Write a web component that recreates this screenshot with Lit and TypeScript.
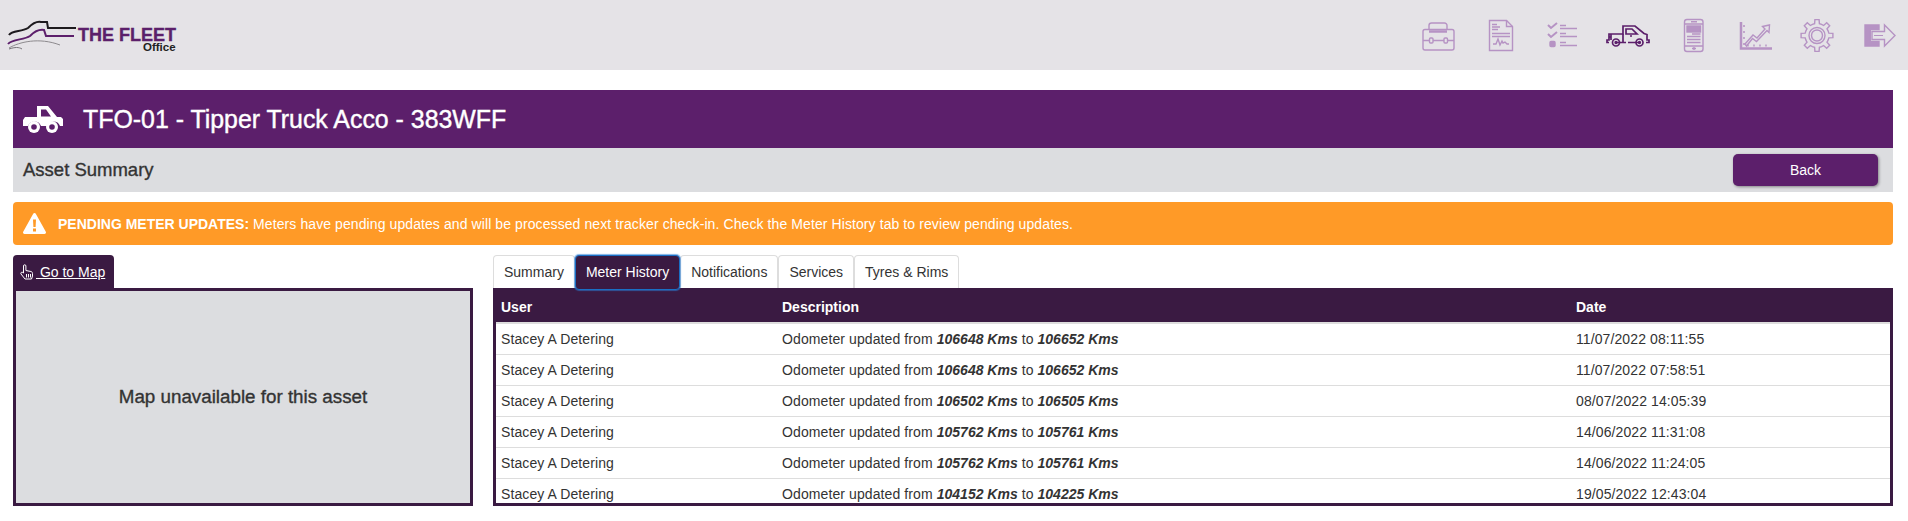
import { LitElement, html, svg, css } from 'lit';
import { customElement } from 'lit/decorators.js';

const rows = [
  ['Stacey A Detering', '106648', '106652', '11/07/2022 08:11:55'],
  ['Stacey A Detering', '106648', '106652', '11/07/2022 07:58:51'],
  ['Stacey A Detering', '106502', '106505', '08/07/2022 14:05:39'],
  ['Stacey A Detering', '105762', '105761', '14/06/2022 11:31:08'],
  ['Stacey A Detering', '105762', '105761', '14/06/2022 11:24:05'],
  ['Stacey A Detering', '104152', '104225', '19/05/2022 12:43:04'],
];

const tabs = ['Summary', 'Meter History', 'Notifications', 'Services', 'Tyres & Rims'];

// outline of a cog, used by the settings icon
function gearPath(cx: number, cy: number, outer: number, inner: number, teeth: number) {
  const pts: string[] = [];
  const step = (Math.PI * 2) / teeth;
  for (let i = 0; i < teeth; i++) {
    const a = i * step - Math.PI / 2;
    const offsets: [number, number][] = [
      [-0.5, inner],
      [-0.26, inner],
      [-0.17, outer],
      [0.17, outer],
      [0.26, inner],
    ];
    for (const [o, r] of offsets) {
      const t = a + o * step;
      pts.push(`${(cx + Math.cos(t) * r).toFixed(1)} ${(cy + Math.sin(t) * r).toFixed(1)}`);
    }
  }
  return `M${pts.join('L')}Z`;
}

const navIcons = [
  {
    w: 67,
    body: svg`
      <rect x="18" y="29.500" width="31" height="20.500" rx="2"/>
      <path d="M24 30v-4.500a2.500 2.500 0 0 1 2.500-2.500h13a2.500 2.500 0 0 1 2.500 2.500V30"/>
      <path d="M24 31.500h18" stroke-width="2.500"/>
      <path d="M18 40.500h6.500M28 40.500h11M42.500 40.500H49"/>
      <rect x="24.500" y="38" width="3.500" height="5" rx="1"/>
      <rect x="39" y="38" width="3.500" height="5" rx="1"/>`,
  },
  {
    w: 58,
    body: svg`
      <path d="M17.500 20.500h17l6 6v24h-23z"/>
      <path d="M34.500 20.500v6h6"/>
      <path d="M20 24.500h5M20 27h8M20 29.500h6M20 33.500h18M20 36.500h18"/>
      <path d="M21 44h3l2-5 2 6 2-4 1 2 2-1 2 2h2"/>`,
  },
  {
    w: 62,
    body: svg`
      <path d="M18 25l3 3 6-5M18 34l3 3 6-5" stroke-width="2"/>
      <rect x="20" y="41.500" width="5" height="5" rx="1" fill="#b693c4"/>
      <path d="M30 25.500h6M30 28.500h17M30 33.500h6M30 36.500h17M30 42.500h6M30 45.500h17"/>`,
  },
  {
    w: 75,
    dark: true,
    body: svg`
      <path d="M17 42.500h-2v-2.500h2v-6h14V26h12l9 7.500 3 1v5.500h2v2.500h-3"/>
      <path d="M31 34v8.500M25 42.500h9M47.500 42.500H36"/>
      <path d="M34 29h6l5 5H34z"/>
      <path d="M17 37h2M19 34v6"/>
      <circle cx="24" cy="42.500" r="3.500"/><circle cx="24" cy="42.500" r=".8"/>
      <circle cx="47.500" cy="42.500" r="3.500"/><circle cx="47.500" cy="42.500" r=".8"/>
      <path d="M38 36h2"/>`,
  },
  {
    w: 55,
    body: svg`
      <rect x="17.500" y="19.500" width="18.500" height="32" rx="2.500"/>
      <path d="M17.500 24h18.500M17.500 46h18.500M24 21.800h6"/>
      <rect x="20" y="26" width="13.500" height="6" fill="#b693c4"/>
      <path d="M25 34h8.500M20 36.500h13.500M20 39.500h13.500M20 42.500h13.500M25 48.500h4M27 47v3"/>`,
  },
  {
    w: 64,
    body: svg`
      <path d="M19 22v26.500h31" stroke-width="2.500"/>
      <path d="M21 26h2M21 32h2M21 38h2M21 44h2M26 46.500v-2M32 46.500v-2M38 46.500v-2M44 46.500v-2"/>
      <path d="M23 44l8-9 4 3 8-9-2.500-2.500 7-1.500-.5 7.500-2-2-10.500 11-4-3-6 7.500z"/>`,
  },
  {
    w: 64,
    body: svg`
      <path d="${gearPath(31, 35.500, 16, 12, 8)}"/>
      <circle cx="31" cy="35.500" r="8"/>
      <circle cx="31" cy="35.500" r="5.500"/>`,
  },
  {
    w: 50,
    body: svg`
      <path d="M29 25h-14v21h14v-4.500h-8.700V29.500H29z" fill="#b693c4"/>
      <path d="M22 31.500h12.500v-6.500l10.500 10.500-10.500 10.500v-6.500H22z"/>
      <path d="M24 35.500h9" stroke-width="1"/>`,
  },
];

@customElement('app-root')
export class AppRoot extends LitElement {
  static styles = css`
    :host {
      display: block;
      height: 521px;
      overflow: hidden;
      background: #fff;
      color: #333;
      font-family: 'Liberation Sans', Arial, sans-serif;
      font-size: 14px;
    }

    .topbar {
      height: 70px;
      display: flex;
      justify-content: space-between;
      background: #e5e3e7;
      padding-right: 8px;
    }

    .logo {
      position: relative;
      width: 190px;
    }

    .logo svg {
      position: absolute;
      left: 0;
      top: 0;
    }

    .logo-name {
      position: absolute;
      left: 78px;
      top: 28px;
      font-size: 18px;
      font-weight: 700;
      line-height: 14px;
      color: #5c1f6b;
      white-space: nowrap;
      -webkit-text-stroke: 0.4px #5c1f6b;
    }

    .logo-sub {
      position: absolute;
      left: 143px;
      top: 43px;
      font-size: 11.5px;
      font-weight: 700;
      line-height: 9px;
      color: #222;
    }

    .nav {
      display: flex;
    }

    .nav svg {
      display: block;
      fill: none;
      stroke: #b693c4;
      stroke-width: 1.4;
    }

    .nav svg.dark {
      stroke: #5c1f6b;
      stroke-width: 1.7;
    }

    .page {
      padding: 20px 15px 0 13px;
    }

    .title {
      height: 58px;
      display: flex;
      align-items: center;
      gap: 20px;
      padding-left: 10px;
      background: #5c1f6b;
      color: #fff;
      font-size: 24.9px;
      -webkit-text-stroke: 0.4px #fff;
    }

    .title svg {
      display: block;
    }

    .subtitle {
      height: 44px;
      display: flex;
      align-items: center;
      justify-content: space-between;
      padding: 0 15px 0 10px;
      background: #dcdde0;
      font-size: 18.5px;
    }

    .subtitle span {
      -webkit-text-stroke: 0.35px #333;
    }

    .back {
      width: 145px;
      height: 32px;
      border: 0;
      border-radius: 5px;
      background: #5c1f6b;
      color: #fff;
      font: inherit;
      font-size: 14px;
      box-shadow: 1px 1px 3px rgba(0, 0, 0, 0.4);
    }

    .alert {
      height: 43px;
      margin-top: 10px;
      display: flex;
      align-items: center;
      gap: 12px;
      padding-left: 10px;
      border-radius: 4px;
      background: #ff9a27;
      color: #fff;
      font-size: 14px;
      letter-spacing: 0.09px;
    }

    .alert b {
      letter-spacing: 0;
    }

    .columns {
      display: grid;
      grid-template-columns: 460px 1400px;
      gap: 20px;
      margin-top: 10px;
    }

    .map-tab {
      width: 101px;
      height: 33px;
      display: flex;
      align-items: center;
      padding-left: 7px;
      box-sizing: border-box;
      border-radius: 4px 4px 0 0;
      background: #3a1a42;
      color: #fff;
      text-decoration: underline;
    }

    .map-tab svg {
      display: block;
      flex: none;
    }

    .map-tab span {
      margin-left: 3px;
      white-space: pre;
    }

    .map-box {
      height: 218px;
      box-sizing: border-box;
      display: flex;
      align-items: center;
      justify-content: center;
      border: 3px solid #3a1a42;
      background: #dcdde0;
      font-size: 18.8px;
      -webkit-text-stroke: 0.35px #333;
    }

    .tabs {
      display: flex;
      height: 33px;
    }

    .tab {
      box-sizing: border-box;
      height: 33px;
      padding: 0 10px;
      display: flex;
      align-items: center;
      border: 1px solid #ddd;
      border-bottom: 0;
      border-radius: 4px 4px 0 0;
      white-space: nowrap;
    }

    .tab.active {
      position: relative;
      z-index: 1;
      height: 35px;
      padding-bottom: 2px;
      border: 1px solid #1a6fc4;
      border-radius: 4px;
      background: #3a1a42;
      color: #fff;
      box-shadow: 0 0 1px 1px rgba(42, 127, 214, 0.6);
    }

    .grid {
      height: 218px;
      box-sizing: border-box;
      overflow: hidden;
      border: 3px solid #3a1a42;
      border-top: 0;
    }

    table {
      width: 100%;
      border-collapse: separate;
      border-spacing: 0;
      table-layout: fixed;
    }

    th,
    td {
      box-sizing: border-box;
      padding: 0 5px;
    }

    th {
      height: 34px;
      padding-top: 4px;
      background: #3a1a42;
      color: #fff;
      text-align: left;
      font-weight: 700;
    }

    td {
      height: 31px;
      border-top: 1px solid #ddd;
      letter-spacing: 0.1px;
    }

    td b {
      letter-spacing: 0;
    }

    tr:first-child td {
      height: 32px;
      border-top: 2px solid #ddd;
    }

    .col-user {
      width: 281px;
    }

    .col-desc {
      width: 794px;
    }
  `;

  render() {
    return html`
      <div class="topbar">
        <div class="logo">
          <svg width="80" height="60" fill="none">
            <path d="M9 35c3-5 12-3 19-7 4-4 8-7 13-6h6l1 6h28" stroke="#1d1a1e" stroke-width="2"/>
            <path d="M8 44c4-5 16-4 22-8 4-4 8-7 14-6l2 6h28" stroke="#5c1f6b" stroke-width="2"/>
            <path d="M9 48c10-6 30-11 51-3" stroke="#8d8a8e" stroke-width="1"/>
            <path d="M9 49c6-2 10-2 13 0" stroke="#77747a" stroke-width="1"/>
          </svg>
          <span class="logo-name">THE FLEET</span>
          <span class="logo-sub">Office</span>
        </div>
        <div class="nav">
          ${navIcons.map(
            (icon) => html`<svg class=${icon.dark ? 'dark' : ''} width=${icon.w} height="70">${icon.body}</svg>`
          )}
        </div>
      </div>

      <div class="page">
        <div class="title">
          <svg width="40" height="28" viewBox="0 0 40 28">
            <path fill="#fff" d="M14 1h11l9 11h4l2 2v7h-3a7 7 0 0 0-13 0h-6a7 7 0 0 0-13 0H0v-6l2-3h12z"/>
            <path fill="#5c1f6b" d="M18 4.500h5l5 7h-10z"/>
            <circle cx="11" cy="22" r="6" fill="#fff"/>
            <circle cx="11" cy="22" r="2.800" fill="#5c1f6b"/>
            <circle cx="29" cy="22" r="6" fill="#fff"/>
            <circle cx="29" cy="22" r="2.800" fill="#5c1f6b"/>
          </svg>
          <span>TFO-01 - Tipper Truck Acco - 383WFF</span>
        </div>
        <div class="subtitle">
          <span>Asset Summary</span>
          <button class="back">Back</button>
        </div>
        <div class="alert">
          <svg width="23" height="21" viewBox="0 0 23 21">
            <path fill="#fff" d="M11.500 0c.6 0 1 .3 1.300.8l10 18c.5 1-.1 2.200-1.300 2.200h-20C.3 21-.3 19.800.2 18.800l10-18c.3-.5.7-.8 1.300-.8z"/>
            <path fill="#ff9a27" d="M10 6.500h3l-.4 7.500h-2.200zM10 15.500h3v3h-3z"/>
          </svg>
          <span><b>PENDING METER UPDATES:</b> Meters have pending updates and will be processed next tracker check-in. Check the Meter History tab to review pending updates.</span>
        </div>

        <div class="columns">
          <section>
            <div class="map-tab">
              <svg width="13" height="16" viewBox="0 0 13 16" fill="none" stroke="#fff" stroke-width="1">
                <path d="M3.500 9V2a1.200 1.200 0 0 1 2.400 0v4.500l5 1c1 .2 1.600 1 1.600 2v2.500l-1 3H5l-4-5c-.8-1.200.8-2.500 1.800-1.500z"/>
                <path d="M6.500 10v3.500M8.500 10v3.500M10.500 10v3.500"/>
              </svg>
              <span> Go to Map</span>
            </div>
            <div class="map-box">Map unavailable for this asset</div>
          </section>
          <section>
            <div class="tabs">
              ${tabs.map((t) => html`<div class="tab ${t === 'Meter History' ? 'active' : ''}">${t}</div>`)}
            </div>
            <div class="grid">
              <table>
                <thead>
                  <tr>
                    <th class="col-user">User</th>
                    <th class="col-desc">Description</th>
                    <th>Date</th>
                  </tr>
                </thead>
                <tbody>
                  ${rows.map(
                    ([user, from, to, date]) => html`
                      <tr>
                        <td>${user}</td>
                        <td>Odometer updated from <b><i>${from} Kms</i></b> to <b><i>${to} Kms</i></b></td>
                        <td>${date}</td>
                      </tr>
                    `
                  )}
                </tbody>
              </table>
            </div>
          </section>
        </div>
      </div>
    `;
  }
}
